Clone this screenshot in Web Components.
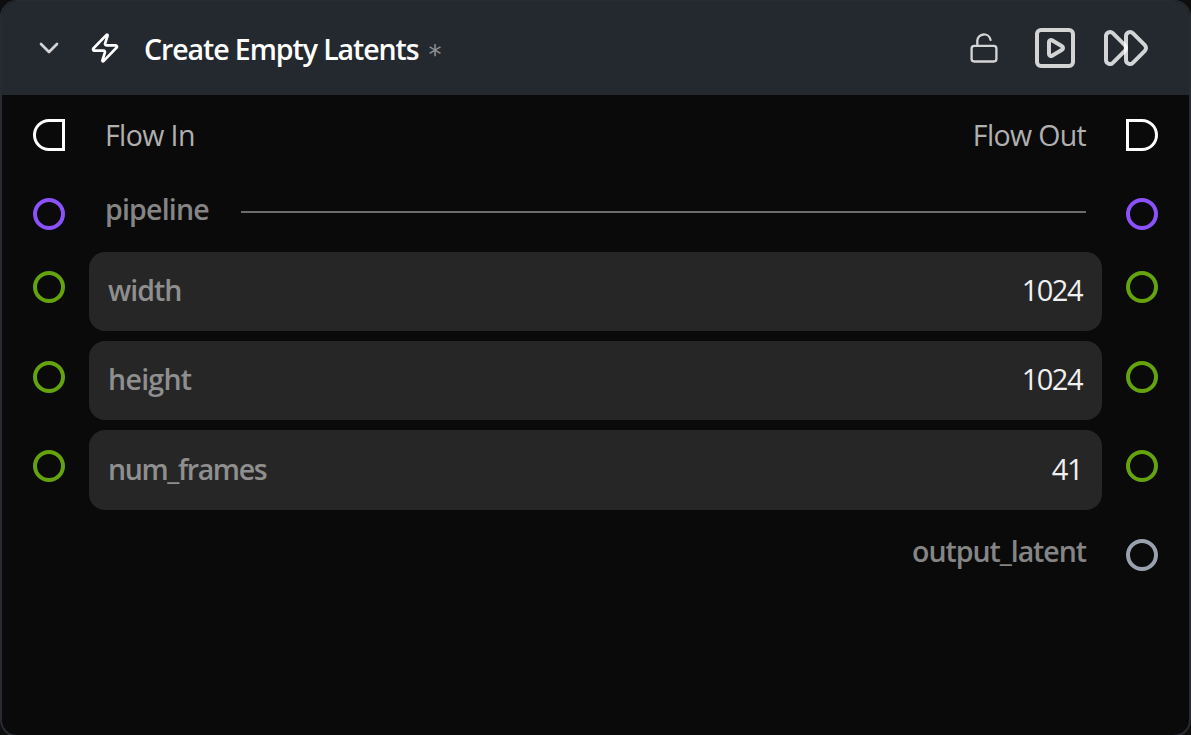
<!DOCTYPE html>
<html lang="en">
<head>
<meta charset="utf-8">
<title>Create Empty Latents</title>
<style>
    html, body {
        height: 100%;
    }

    body {
        margin: 0;
        overflow: hidden;
        background: #0e0e0e;
        font-family: "Open Sans", "Noto Sans", sans-serif;
        font-size: 28.5px;
        line-height: 32px;
    }
</style>
</head>
<body>

<node-card>
    <node-header slot="header" heading="Create Empty Latents" modified>
        <node-icon name="chevron" size="32"></node-icon>
        <node-icon name="zap" size="32"></node-icon>
        <node-icon slot="actions" name="unlock" size="32"></node-icon>
        <node-icon slot="actions" name="play" size="48"></node-icon>
        <node-icon slot="actions" name="forward" size="48"></node-icon>
    </node-header>

    <node-row style="--height: 80px; --port-top: 24px">
        <node-port slot="in" kind="flow-in"></node-port>
        <node-label style="--top: 24px; --tracking: -0.6px">Flow In</node-label>
        <node-label end style="--top: 24px; --tracking: -0.65px">Flow Out</node-label>
        <node-port slot="out" kind="flow-out"></node-port>
    </node-row>

    <node-row style="--height: 77px; --port-top: 23px">
        <node-port slot="in" kind="pipeline"></node-port>
        <node-label strong line style="--top: 18px; --tracking: -0.8px">pipeline</node-label>
        <node-port slot="out" kind="pipeline"></node-port>
    </node-row>

    <node-row style="--height: 89px; --port-top: 19px">
        <node-port slot="in" kind="int"></node-port>
        <node-field label="width" value="1024" style="--tracking: -1px"></node-field>
        <node-port slot="out" kind="int"></node-port>
    </node-row>

    <node-row style="--height: 89px; --port-top: 20px">
        <node-port slot="in" kind="int"></node-port>
        <node-field label="height" value="1024" style="--tracking: -0.7px"></node-field>
        <node-port slot="out" kind="int"></node-port>
    </node-row>

    <node-row style="--height: 90px; --port-top: 20px">
        <node-port slot="in" kind="int"></node-port>
        <node-field label="num_frames" value="41" style="--tracking: -1.4px"></node-field>
        <node-port slot="out" kind="int"></node-port>
    </node-row>

    <node-row style="--height: 80px; --port-top: 19px">
        <node-label strong end style="--top: 15px; --tracking: -1.05px">output_latent</node-label>
        <node-port slot="out" kind="any"></node-port>
    </node-row>
</node-card>

<script>
const icons = {
    chevron: `<path d="m6 9 6 6 6-6"/>`,
    zap: `<path d="M4 14a1 1 0 0 1-.78-1.63l9.9-10.2a.5.5 0 0 1 .86.46l-1.92 6.02A1 1 0 0 0 13 10h7a1 1 0 0 1 .78 1.63l-9.9 10.2a.5.5 0 0 1-.86-.46l1.92-6.02A1 1 0 0 0 11 14z"/>`,
    unlock: `<rect x="2.7" y="10.4" width="18.6" height="11.7" rx="2"/><path d="M7 10.4V6.5a5 5 0 0 1 9.9-.6"/>`,
    play: `<rect x="3" y="3" width="18" height="18" rx="2"/><path d="M9 9.003a1 1 0 0 1 1.517-.859l4.997 2.997a1 1 0 0 1 0 1.718l-4.997 2.997A1 1 0 0 1 9 14.996z"/>`,
    forward: `<path d="M12 6a2 2 0 0 1 3.414-1.414l6 6a2 2 0 0 1 0 2.828l-6 6A2 2 0 0 1 12 18z"/><path d="M2 6a2 2 0 0 1 3.414-1.414l6 6a2 2 0 0 1 0 2.828l-6 6A2 2 0 0 1 2 18z"/>`
};

class BaseElement extends HTMLElement {
    constructor() {
        super();
        this.attachShadow({mode: 'open'});
    }

    connectedCallback() {
        this.shadowRoot.innerHTML = this.render();
    }
}

customElements.define('node-card', class extends BaseElement {
    render() {
        return `
            <style>
                :host {
                    display: flex;
                    flex-direction: column;
                    box-sizing: border-box;
                    height: 737px;
                    border: 2px solid #282b31;
                    border-top-width: 1px;
                    border-radius: 17px;
                    overflow: hidden;
                    background: #0a0a0a;
                }
            </style>
            <slot name="header"></slot>
            <slot></slot>
        `;
    }
});

customElements.define('node-header', class extends BaseElement {
    render() {
        return `
            <style>
                :host {
                    display: flex;
                    align-items: center;
                    justify-content: space-between;
                    flex: none;
                    box-sizing: border-box;
                    height: 94px;
                    padding: 0 39px 0 31px;
                    background: #24282f;
                    color: #d4d4d4;
                }

                .title, .actions {
                    display: flex;
                    align-items: center;
                }

                .title {
                    gap: 24px;
                }

                .actions {
                    gap: 23px;
                }

                h1 {
                    display: flex;
                    align-items: center;
                    gap: 10px;
                    margin: 1px 0 0 -1px;
                    font-size: 28.5px;
                    font-weight: 650;
                    line-height: 32px;
                    letter-spacing: -1.08px;
                    white-space: nowrap;
                    color: #fff;
                }

                small {
                    padding-top: 12px;
                    font-family: "DejaVu Sans", sans-serif;
                    font-size: 26px;
                    font-weight: 400;
                    color: #8f9195;
                }
            </style>
            <div class="title">
                <slot></slot>
                <h1>${this.getAttribute('heading')}${this.hasAttribute('modified') ? '<small>*</small>' : ''}</h1>
            </div>
            <div class="actions"><slot name="actions"></slot></div>
        `;
    }
});

customElements.define('node-icon', class extends BaseElement {
    render() {
        const size = this.getAttribute('size');
        const name = this.getAttribute('name');
        return `
            <style>
                :host {
                    display: block;
                    flex: none;
                }

                :host([name="zap"]) {
                    color: #fff;
                }

                :host([name="unlock"]) {
                    margin-right: 8.5px;
                }

                :host([name="forward"]) {
                    color: rgba(255, 255, 255, .8);
                }

                svg {
                    display: block;
                    fill: none;
                    stroke: currentColor;
                    stroke-linecap: round;
                    stroke-linejoin: round;
                }
            </style>
            <svg width="${size}" height="${size}" viewBox="0 0 24 24" stroke-width="${name === 'unlock' ? 1.75 : 2}">${icons[name]}</svg>
        `;
    }
});

customElements.define('node-row', class extends BaseElement {
    render() {
        return `
            <style>
                :host {
                    display: grid;
                    grid-template-columns: 32px 1fr 32px;
                    column-gap: 24px;
                    flex: none;
                    height: var(--height);
                    padding: 0 31px;
                }

                .port {
                    padding-top: var(--port-top);
                }

                .content {
                    display: flex;
                    align-items: flex-start;
                    justify-content: space-between;
                }
            </style>
            <div class="port"><slot name="in"></slot></div>
            <div class="content"><slot></slot></div>
            <div class="port"><slot name="out"></slot></div>
        `;
    }
});

customElements.define('node-port', class extends BaseElement {
    render() {
        return `
            <style>
                :host {
                    display: block;
                    box-sizing: border-box;
                    width: 32px;
                    height: 32px;
                    border: 4px solid #99a1af;
                    border-radius: 50%;
                }

                :host([kind="pipeline"]) {
                    border-color: #8b51fc;
                }

                :host([kind="int"]) {
                    border-color: #65a30d;
                }

                :host([kind^="flow"]) {
                    border: 3px solid #fff;
                    border-radius: 16px 0 0 16px;
                }

                :host([kind="flow-out"]) {
                    border-radius: 0 16px 16px 0;
                }
            </style>
        `;
    }
});

customElements.define('node-label', class extends BaseElement {
    render() {
        return `
            <style>
                :host {
                    display: flex;
                    align-items: center;
                    gap: 32px;
                    margin: var(--top) 16px 0;
                    letter-spacing: var(--tracking);
                    white-space: nowrap;
                    color: #b0b0b0;
                }

                :host([strong]) {
                    font-weight: 600;
                    color: #858585;
                }

                :host([end]) {
                    margin-left: auto;
                }

                :host([line]) {
                    flex: 1;
                }

                hr {
                    flex: 1;
                    height: 2px;
                    margin: 5px 0 0;
                    border: 0;
                    background: #6c6c6c;
                }
            </style>
            <span><slot></slot></span>
            ${this.hasAttribute('line') ? '<hr>' : ''}
        `;
    }
});

customElements.define('node-field', class extends BaseElement {
    render() {
        return `
            <style>
                :host {
                    display: flex;
                    align-items: center;
                    justify-content: space-between;
                    flex: 1;
                    box-sizing: border-box;
                    height: calc(var(--height) - 10px);
                    padding: 0 20px 3px 19px;
                    border-radius: 16px;
                    background: #262626;
                }

                .label {
                    font-weight: 600;
                    letter-spacing: var(--tracking);
                    color: #8f8f8f;
                }

                .value {
                    font-size: 29px;
                    letter-spacing: -1.5px;
                    color: #f0f0f0;
                }
            </style>
            <span class="label">${this.getAttribute('label')}</span>
            <span class="value">${this.getAttribute('value')}</span>
        `;
    }
});
</script>
</body>
</html>
